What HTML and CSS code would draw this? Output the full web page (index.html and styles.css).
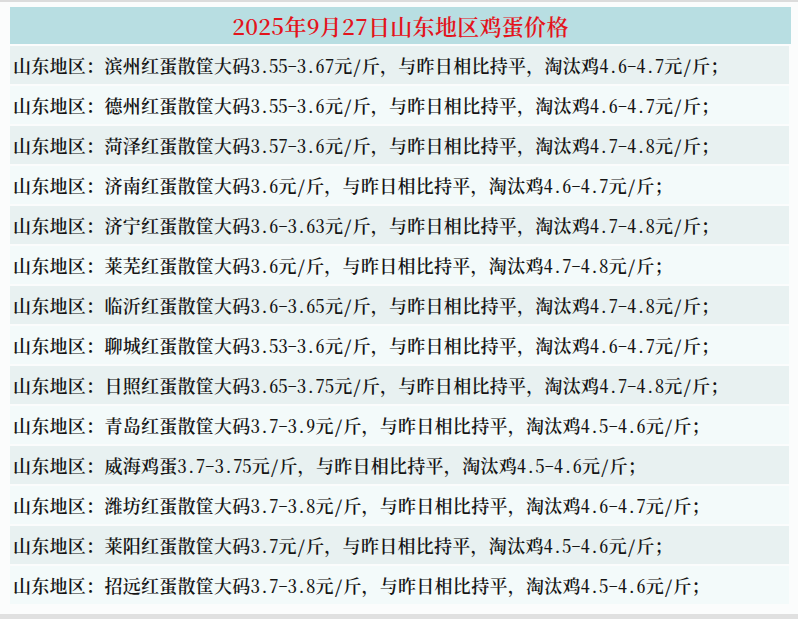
FILE: index.html
```html
<!DOCTYPE html>
<html lang="zh-CN">
<head>
<meta charset="utf-8">
<title>2025年9月27日山东地区鸡蛋价格</title>
<link rel="stylesheet" href="styles.css">
</head>
<body>
<div class="topbar"></div>
<div class="sheet">
  <div class="title">2025年9月27日山东地区鸡蛋价格</div>
  <div class="rows">
    <div class="row odd">山东地区：滨州红蛋散筐大码<span class="n">3.55-3.67</span>元<span class="n">/</span>斤，与昨日相比持平，淘汰鸡<span class="n">4.6-4.7</span>元<span class="n">/</span>斤；</div>
    <div class="row even">山东地区：德州红蛋散筐大码<span class="n">3.55-3.6</span>元<span class="n">/</span>斤，与昨日相比持平，淘汰鸡<span class="n">4.6-4.7</span>元<span class="n">/</span>斤；</div>
    <div class="row odd">山东地区：菏泽红蛋散筐大码<span class="n">3.57-3.6</span>元<span class="n">/</span>斤，与昨日相比持平，淘汰鸡<span class="n">4.7-4.8</span>元<span class="n">/</span>斤；</div>
    <div class="row even">山东地区：济南红蛋散筐大码<span class="n">3.6</span>元<span class="n">/</span>斤，与昨日相比持平，淘汰鸡<span class="n">4.6-4.7</span>元<span class="n">/</span>斤；</div>
    <div class="row odd">山东地区：济宁红蛋散筐大码<span class="n">3.6-3.63</span>元<span class="n">/</span>斤，与昨日相比持平，淘汰鸡<span class="n">4.7-4.8</span>元<span class="n">/</span>斤；</div>
    <div class="row even">山东地区：莱芜红蛋散筐大码<span class="n">3.6</span>元<span class="n">/</span>斤，与昨日相比持平，淘汰鸡<span class="n">4.7-4.8</span>元<span class="n">/</span>斤；</div>
    <div class="row odd">山东地区：临沂红蛋散筐大码<span class="n">3.6-3.65</span>元<span class="n">/</span>斤，与昨日相比持平，淘汰鸡<span class="n">4.7-4.8</span>元<span class="n">/</span>斤；</div>
    <div class="row even">山东地区：聊城红蛋散筐大码<span class="n">3.53-3.6</span>元<span class="n">/</span>斤，与昨日相比持平，淘汰鸡<span class="n">4.6-4.7</span>元<span class="n">/</span>斤；</div>
    <div class="row odd">山东地区：日照红蛋散筐大码<span class="n">3.65-3.75</span>元<span class="n">/</span>斤，与昨日相比持平，淘汰鸡<span class="n">4.7-4.8</span>元<span class="n">/</span>斤；</div>
    <div class="row even">山东地区：青岛红蛋散筐大码<span class="n">3.7-3.9</span>元<span class="n">/</span>斤，与昨日相比持平，淘汰鸡<span class="n">4.5-4.6</span>元<span class="n">/</span>斤；</div>
    <div class="row odd">山东地区：威海鸡蛋<span class="n">3.7-3.75</span>元<span class="n">/</span>斤，与昨日相比持平，淘汰鸡<span class="n">4.5-4.6</span>元<span class="n">/</span>斤；</div>
    <div class="row even">山东地区：潍坊红蛋散筐大码<span class="n">3.7-3.8</span>元<span class="n">/</span>斤，与昨日相比持平，淘汰鸡<span class="n">4.6-4.7</span>元<span class="n">/</span>斤；</div>
    <div class="row odd">山东地区：莱阳红蛋散筐大码<span class="n">3.7</span>元<span class="n">/</span>斤，与昨日相比持平，淘汰鸡<span class="n">4.5-4.6</span>元<span class="n">/</span>斤；</div>
    <div class="row even">山东地区：招远红蛋散筐大码<span class="n">3.7-3.8</span>元<span class="n">/</span>斤，与昨日相比持平，淘汰鸡<span class="n">4.5-4.6</span>元<span class="n">/</span>斤；</div>
  </div>
</div>
<div class="bottombar"></div>
</body>
</html>
```
FILE: styles.css
```css
html, body {
  margin: 0;
  padding: 0;
  background: #fbfcfc;
}
body {
  width: 798px;
  height: 619px;
  overflow: hidden;
  display: flex;
  flex-direction: column;
  font-family: "Noto Serif CJK SC", "Noto Sans CJK SC", serif;
}
.topbar {
  height: 2px;
  background: #dcdcdc;
}
.sheet {
  flex: 1;
  padding: 5px 7px 0 10px;
  display: flex;
  flex-direction: column;
  gap: 2px;
}
.title {
  height: 37px;
  background: #b8dee2;
  color: #e3141c;
  font-size: 22px;
  font-weight: 600;
  display: flex;
  align-items: center;
  justify-content: center;
  letter-spacing: 0.3px;
}
.rows {
  display: flex;
  flex-direction: column;
  gap: 2px;
  margin-right: 2px;
}
.row {
  height: 38px;
  display: flex;
  align-items: center;
  padding-left: 3px;
  font-size: 18px;
  color: #151515;
  white-space: nowrap;
  font-weight: 600;
  letter-spacing: 0.28px;
}
.odd { background: #e8f1f1; }
.even { background: #f3fafa; }
.n {
  font-feature-settings: "hwid" 1;
  font-weight: 500;
}
.bottombar {
  height: 5px;
  background: #e0e0e0;
}
```
